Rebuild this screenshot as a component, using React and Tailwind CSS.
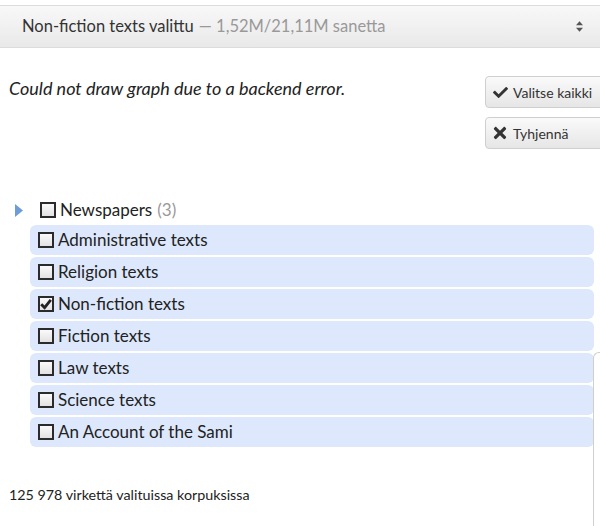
import React from "react";
import { FaCheck, FaTimes } from "react-icons/fa";

const corpora = [
  { name: "Administrative texts", checked: false },
  { name: "Religion texts", checked: false },
  { name: "Non-fiction texts", checked: true },
  { name: "Fiction texts", checked: false },
  { name: "Law texts", checked: false },
  { name: "Science texts", checked: false },
  { name: "An Account of the Sami", checked: false },
];

// Square checkbox drawn like the old browser default
const Box = ({ checked }) => (
  <span className="w-[16px] h-[16px] border-2 border-[#2b2b2b] bg-gradient-to-b from-[#fafafa] to-[#e2e2e2] flex items-center justify-center flex-shrink-0">
    {checked && (
      <svg viewBox="0 0 12 12" className="w-[12px] h-[12px]">
        <path d="M1.2 6.2 L4.6 9.6 L10.8 1.8" fill="none" stroke="#222" strokeWidth="2.8" />
      </svg>
    )}
  </span>
);

const Button = ({ icon: Icon, size, children }) => (
  <button className="h-[32px] w-[130px] flex items-center gap-[5px] pl-[6px] rounded-[4px] border border-[#cfcfcf] bg-gradient-to-b from-[#fafafa] to-[#e6e6e6] text-[14px] text-[#333]">
    <span className="w-[16px] flex justify-center items-center">
      <Icon className={`${size} text-[#333]`} />
    </span>
    {children}
  </button>
);

export default function App() {
  return (
    <div className="relative w-[600px] h-[526px] overflow-hidden bg-white text-[#222] font-['Lato',sans-serif]">
      {/* corpus chooser bar */}
      <div className="mt-[5px] h-[43px] border-y border-[#dcdcdc] bg-gradient-to-b from-[#f8f8f8] to-[#e9e9e9] flex items-center pl-[22px] pr-[17px]">
        <span className="text-[16.5px] text-[#333]">Non-fiction texts valittu</span>
        <span className="text-[16.5px] text-[#999] ml-[5px]">— 1,52M/21,11M sanetta</span>
        <svg viewBox="0 0 8 12" className="ml-auto w-[7px] h-[11px]">
          <path d="M4 0 L8 4.5 L0 4.5 Z M4 12 L8 7.5 L0 7.5 Z" fill="#555" />
        </svg>
      </div>

      <div className="flex">
        <p className="pl-[9px] pt-[28px] text-[18px] italic leading-[24px]">
          Could not draw graph due to a backend error.
        </p>
        <div className="ml-auto mr-[-15px] pt-[28px] flex flex-col gap-[9px]">
          <Button icon={FaCheck} size="w-[15px] h-[15px]">Valitse kaikki</Button>
          <Button icon={FaTimes} size="w-[18px] h-[18px]">Tyhjennä</Button>
        </div>
      </div>

      {/* corpus tree */}
      <div className="mt-[46px] pr-[6px]">
        <div className="h-[30px] flex items-center text-[17px]">
          <svg viewBox="0 0 8 13" className="ml-[15px] w-[8px] h-[13px]">
            <path d="M0 0 L8 6.5 L0 13 Z" fill="#6f9bd6" />
          </svg>
          <span className="ml-[17px]">
            <Box />
          </span>
          <span className="ml-[4px]">Newspapers</span>
          <span className="ml-[5px] text-[#999]">(3)</span>
        </div>
        <div className="ml-[30px] flex flex-col gap-[2px]">
          {corpora.map((c) => (
            <div
              key={c.name}
              className="h-[30px] rounded-[6px] bg-[#dde8fc] flex items-center pl-[8px] gap-[4px] text-[17px]"
            >
              <Box checked={c.checked} />
              <span>{c.name}</span>
            </div>
          ))}
        </div>
      </div>

      <p className="mt-[37px] pl-[9px] text-[14.3px]">125 978 virkettä valituissa korpuksissa</p>

      {/* edge of the side panel that overlaps the list */}
      <div className="absolute left-[593px] top-[352px] bottom-0 w-[20px] border-l border-t border-[#cfcfcf] rounded-tl-[6px]" />
    </div>
  );
}
